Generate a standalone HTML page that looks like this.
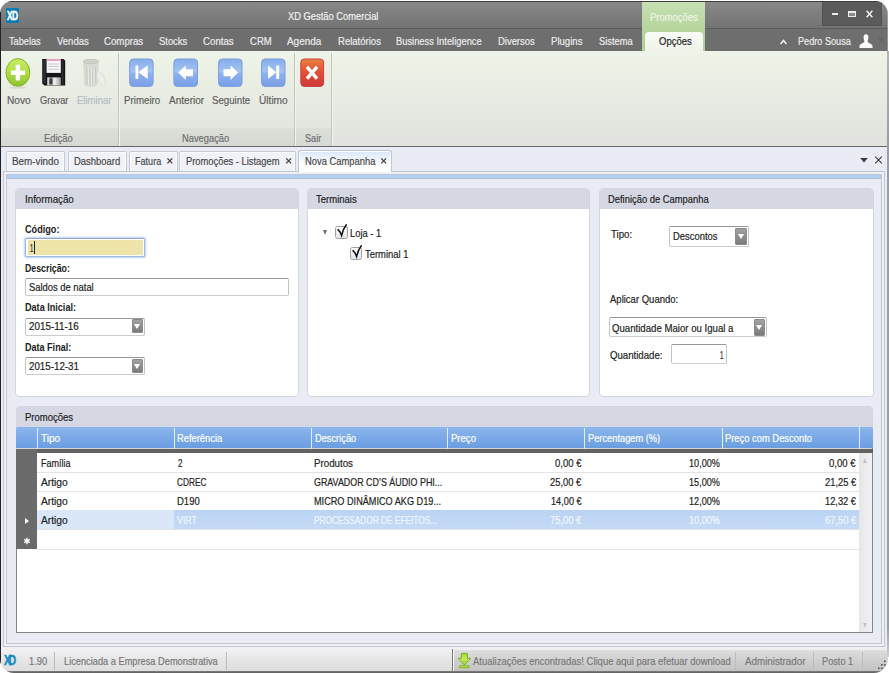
<!DOCTYPE html>
<html lang="pt"><head><meta charset="utf-8"><title>XD Gestão Comercial</title>
<style>
html,body{margin:0;padding:0;background:#fff}
body{width:889px;height:673px;position:relative;overflow:hidden;font-family:"Liberation Sans",sans-serif}
#win{position:absolute;left:0;top:0;width:889px;height:673px;clip-path:inset(1px 1.3px 0 0 round 12.5px 12.5px 14px 14px);background:#e9ecf3}
#win div,#win svg{position:absolute}
.t{-webkit-text-stroke:0.2px;position:absolute;white-space:pre;line-height:16px;height:16px;transform-origin:0 50%}
#texts{position:absolute;left:0;top:0;width:889px;height:673px;clip-path:inset(1px 1.3px 0 0 round 12.5px 12.5px 14px 14px)}
.panel{border:1px solid #d3d6de;border-radius:4px;background:#fff;box-sizing:border-box;overflow:hidden}
.phead{left:0;top:0;right:0;height:20px;background:#d5d8e2}
.inp{box-sizing:border-box;border:1px solid #c2c3c6;border-top-color:#979797;border-bottom-color:#cbccce;border-radius:2px;background:#fff}
.ddb{border-radius:1px;background:linear-gradient(#a2a2a2,#7b7b7b);border:1px solid #8a8a8a;box-sizing:border-box}
.ddb:after{content:"";position:absolute;left:50%;top:50%;margin:-2px 0 0 -3px;border:3px solid transparent;border-top:5px solid #fff;border-bottom:0}
.dtab{box-sizing:border-box;border:1px solid #c6c9d2;border-bottom:0;background:#f0f2f8;border-radius:2px 2px 0 0;box-shadow:inset 1px 1px 0 #fafbfd,inset -1px 0 0 #fafbfd}
.vsep{width:1px;background:#b9bcc4}
.hl{height:1px;background:#e3e3e3}
.cb{box-sizing:border-box;border:1.3px solid #a2a2a6;border-radius:2.5px;background:linear-gradient(#fdfdfd,#e6e6e8)}

</style></head>
<body>
<div id="win">
<!-- title bar -->
<div style="left:0;top:1px;width:889px;height:27px;background:linear-gradient(#898989,#737373)"></div>
<div style="left:0;top:1px;width:889px;height:1px;background:#3c3c3c"></div>
<div style="left:0;top:28px;width:889px;height:1px;background:#5c5c5c"></div>
<div style="left:0;top:29px;width:889px;height:22.3px;background:#6e6e6e"></div>
<!-- xd logo -->
<div style="left:6px;top:8px;width:13px;height:15px;background:#0b7bb6"></div>
<!-- contextual tab -->
<div style="left:642px;top:2px;width:63px;height:49.3px;background:linear-gradient(#c7dfb3,#b6d69d 55%,#acd092)"></div>
<div style="left:644.8px;top:32px;width:58.2px;height:19.4px;background:linear-gradient(#fafcf7,#eff2e9);border-radius:4px 4px 0 0"></div>
<!-- window buttons -->
<div style="left:822px;top:2px;width:59.8px;height:23.8px;background:#5b5b5b;box-sizing:border-box;border:1px solid #525252;border-top:0"></div>
<div style="left:831.6px;top:12.7px;width:6px;height:2px;background:#ececec"></div>
<div style="left:848.3px;top:11px;width:7.5px;height:5.7px;box-sizing:border-box;border:1px solid #ececec;border-top-width:2px;background:#8a8a8a"></div>
<svg style="left:866.3px;top:10px" width="7" height="8" viewBox="0 0 7 8"><path d="M0.6 0.8 L6.4 7.2 M6.4 0.8 L0.6 7.2" stroke="#f4f4f4" stroke-width="1.4"/></svg>
<!-- caret + user -->
<svg style="left:780.2px;top:38.5px" width="7" height="6" viewBox="0 0 7 6"><path d="M0.6 5 L3.5 1.5 L6.4 5" stroke="#f0f0f0" stroke-width="1.5" fill="none"/></svg>
<svg style="left:859.3px;top:33.5px" width="14" height="14" preserveAspectRatio="none" viewBox="0 0 15 14"><path d="M7.5 0.3 C5.6 0.3 4.9 2 4.9 3.6 C4.9 5.6 5.8 6.6 5.8 7.6 C5.8 9.2 0.5 9.6 0.5 12.2 V14 H14.5 V12.2 C14.5 9.6 9.2 9.2 9.2 7.6 C9.2 6.6 10.1 5.6 10.1 3.6 C10.1 2 9.4 0.3 7.5 0.3 Z" fill="#fafafa"/></svg>
<div style="left:878px;top:38px;width:0;height:0;border:3px solid transparent;border-top:4px solid #646464;border-bottom:0"></div>
<!-- ribbon -->
<div style="left:0;top:51px;width:889px;height:95px;background:linear-gradient(#eef4e7,#e1e2de)"></div>
<div style="left:0;top:128px;width:331px;height:18px;background:linear-gradient(#dcded8,#d6d8d3)"></div>
<div style="left:118px;top:53px;width:1px;height:93px;background:#c3c5bf"></div><div style="left:119px;top:53px;width:1px;height:93px;background:#f1f3ed"></div>
<div style="left:293.5px;top:53px;width:1px;height:93px;background:#c3c5bf"></div><div style="left:294.5px;top:53px;width:1px;height:93px;background:#f1f3ed"></div>
<div style="left:331px;top:53px;width:1px;height:93px;background:#c3c5bf"></div><div style="left:332px;top:53px;width:1px;height:93px;background:#f1f3ed"></div>
<div style="left:0;top:145.7px;width:889px;height:1.2px;background:#686868"></div>
<!-- ICONS -->
<!--ICONS_START-->
<svg style="left:0;top:52px" width="340" height="40" viewBox="0 52 340 40">
<defs>
<linearGradient id="gG" x1="0" y1="0" x2="0" y2="1"><stop offset="0" stop-color="#c9ee66"/><stop offset="0.5" stop-color="#b0de46"/><stop offset="1" stop-color="#8cc02c"/></linearGradient>
<linearGradient id="gB" x1="0" y1="0" x2="0" y2="1"><stop offset="0" stop-color="#86adea"/><stop offset="0.45" stop-color="#a3c2f3"/><stop offset="0.55" stop-color="#8cb0ee"/><stop offset="1" stop-color="#7a9fe6"/></linearGradient>
<linearGradient id="gR" x1="0" y1="0" x2="0" y2="1"><stop offset="0" stop-color="#ea8040"/><stop offset="0.5" stop-color="#df5038"/><stop offset="1" stop-color="#d0383a"/></linearGradient>
<linearGradient id="gS" x1="0" y1="0" x2="1" y2="0"><stop offset="0" stop-color="#f4f4f4"/><stop offset="0.3" stop-color="#8a8a8a"/><stop offset="0.5" stop-color="#f8f8f8"/><stop offset="1" stop-color="#9a9a9a"/></linearGradient>
</defs>
<!-- novo -->
<ellipse cx="17.9" cy="72.5" rx="11.9" ry="13.9" fill="url(#gG)" stroke="#82b02a" stroke-width="1"/>
<ellipse cx="17.9" cy="87.5" rx="9" ry="1.2" fill="#c9ccc4" opacity=".6"/>
<path d="M15.7 64.7 H20.1 V70.5 H24.9 V75.1 H20.1 V80.6 H15.7 V75.1 H11 V70.5 H15.7 Z" fill="#fff"/>
<!-- gravar -->
<path d="M42.2 59 H63.5 L65.2 60.5 V85.6 H44.4 L42.2 83.4 Z" fill="#16161a"/>
<rect x="43.4" y="60" width="2.2" height="23" fill="#3c3c44" opacity=".7"/><rect x="61.6" y="60" width="2" height="24.5" fill="#34343a" opacity=".7"/><rect x="46.6" y="59.3" width="14.2" height="13.6" fill="#f7f7f9"/>
<rect x="46.6" y="59.3" width="14.2" height="1.8" fill="#e9a3c4"/>
<rect x="48.4" y="63.6" width="10.4" height="0.8" fill="#b9bcc6"/><rect x="48.4" y="66.2" width="10.4" height="0.8" fill="#b9bcc6"/><rect x="48.4" y="68.8" width="10.4" height="0.8" fill="#b9bcc6"/>
<rect x="47.3" y="77.4" width="13.5" height="7.8" fill="url(#gS)"/>
<rect x="49.4" y="78.6" width="3" height="5.6" fill="#3a3a3e"/>
<!-- eliminar (disabled) -->
<g opacity=".95">
<path d="M83.6 62 L84.8 84.6 C86.6 86.8 95.2 86.8 96.9 84.6 L98.2 62 C95.6 65 86.2 65 83.6 62 Z" fill="#d9dbd6" stroke="#cbcdc8" stroke-width=".6"/>
<path d="M86.6 66 L87.3 84.6 M89.8 66.6 L90.1 85.6 M92.9 66.6 L92.8 85.6 M95.6 66 L95.2 84.6" stroke="#c5c7c2" stroke-width="1"/>
<path d="M88.2 66.4 L88.7 85.2 M91.4 66.8 L91.5 85.8 M94.3 66.4 L94.1 85.2" stroke="#e9ebe6" stroke-width=".9"/>
<ellipse cx="90.9" cy="61.5" rx="7.6" ry="2.2" fill="#cdd0c9" stroke="#bfc2bb" stroke-width=".9"/>
<ellipse cx="101" cy="78.8" rx="3.3" ry="7.6" transform="rotate(-24 101 78.8)" fill="#eceeea" stroke="#d6d8d3" stroke-width=".7"/>
</g>
<!-- nav buttons -->
<rect x="129.7" y="59" width="23.4" height="27.4" rx="3.5" fill="url(#gB)" stroke="#7c9ddd" stroke-width="1"/>
<path d="M135.5 65.5 H138.3 V79 H135.5 Z M138.3 72.3 L147.7 65.5 V79 Z" fill="#fff"/>
<rect x="173.9" y="59" width="23.6" height="27.4" rx="3.5" fill="url(#gB)" stroke="#7c9ddd" stroke-width="1"/>
<path d="M178.1 72.6 L185.8 65.5 V69.3 H193 V76.3 H185.8 V80 Z" fill="#fff"/>
<rect x="218.6" y="59" width="23.4" height="27.4" rx="3.5" fill="url(#gB)" stroke="#7c9ddd" stroke-width="1"/>
<path d="M238.1 72.6 L230.6 65.5 V69.3 H223.5 V76.3 H230.6 V80 Z" fill="#fff"/>
<rect x="261.6" y="59" width="23.4" height="27.4" rx="3.5" fill="url(#gB)" stroke="#7c9ddd" stroke-width="1"/>
<path d="M279.2 65.5 H276.3 V79 H279.2 Z M276.3 72.3 L268.1 65.5 V79 Z" fill="#fff"/>
<!-- sair -->
<rect x="300.8" y="59" width="22.8" height="27.4" rx="3.5" fill="url(#gR)" stroke="#c8403c" stroke-width="1"/>
<path d="M307 66.8 L317 78.6 M317 66.8 L307 78.6" stroke="#fff" stroke-width="3.4"/>
</svg>
<!--ICONS_END-->
<!-- doc tabs -->
<div style="left:0;top:146.5px;width:889px;height:32px;background:#e9ecf5"></div>
<div class="dtab" style="left:6.2px;top:151px;width:59.3px;height:20px"></div>
<div class="dtab" style="left:67.5px;top:151px;width:59.3px;height:20px"></div>
<div class="dtab" style="left:128.5px;top:151px;width:49.3px;height:20px"></div>
<div class="dtab" style="left:179.2px;top:151px;width:117.3px;height:20px"></div>
<div style="left:3.4px;top:170.5px;width:881.8px;height:476.3px;box-sizing:border-box;border:1px solid #c3c6cf;background:#eef0f7"></div>
<div style="left:6.3px;top:174px;width:876px;height:469.5px;box-sizing:border-box;border:1px solid #c0c5d0;background:#e9ecf5"></div>
<div style="left:7.3px;top:175px;width:874px;height:3.2px;background:#b1d0f5"></div>
<div style="left:7.3px;top:178.2px;width:874px;height:1px;background:#b9bfcc"></div>
<div class="dtab" style="left:298.4px;top:150px;width:93.7px;height:21.6px;background:linear-gradient(#d9e6f9,#fff 65%);border-color:#bcc6d8;border-radius:3px 3px 0 0"></div>
<!-- tab closers -->
<svg style="left:0;top:150px" width="889" height="24" viewBox="0 150 889 24"><g stroke="#3c3c3c" stroke-width="1.25" fill="none">
<path d="M167.4 158.4 L172.3 163.4 M172.3 158.4 L167.4 163.4"/>
<path d="M286.2 158.4 L291.1 163.4 M291.1 158.4 L286.2 163.4"/>
<path d="M381.2 158.4 L386.1 163.4 M386.1 158.4 L381.2 163.4"/>
<path d="M875.2 156.6 L881.8 163.3 M881.8 156.6 L875.2 163.3" stroke-width="1.1"/>
</g><path d="M860.2 158 H867.8 L864 162.4 Z" fill="#3c3c3c"/></svg>
<!-- doc area -->
<!-- panels -->
<div class="panel" style="left:15px;top:188px;width:283.6px;height:208.5px"><div class="phead"></div></div>
<div class="panel" style="left:306.6px;top:188px;width:283.6px;height:208.5px"><div class="phead"></div></div>
<div class="panel" style="left:598.5px;top:188px;width:275px;height:208.5px"><div class="phead"></div></div>
<div class="panel" style="left:15.5px;top:406.25px;width:857.5px;height:227px;border-radius:4px 4px 0 0;background:#d5d8e2"></div>
<!-- inputs -->
<div class="inp" style="left:25px;top:237.8px;width:119.6px;height:19.6px;background:#fff;border-color:#9db8e4;border-top-color:#93a6c6;box-shadow:0 0 2px 0.6px #bcd2f3"></div><div style="left:27.6px;top:239.7px;width:115.4px;height:15.6px;background:#eee4a9"></div>
<div style="left:34px;top:241.3px;width:1px;height:13px;background:#222"></div>
<div class="inp" style="left:25px;top:278px;width:263.5px;height:17.5px"></div>
<div class="inp" style="left:25px;top:317.5px;width:120px;height:18px"></div><div class="ddb" style="left:131.6px;top:319.3px;width:11.8px;height:14.2px"></div>
<div class="inp" style="left:25px;top:356.75px;width:120px;height:18px"></div><div class="ddb" style="left:131.6px;top:358.6px;width:11.8px;height:14.2px"></div>
<div class="inp" style="left:669px;top:226px;width:79.5px;height:20.7px"></div><div class="ddb" style="left:735.25px;top:227.5px;width:11.5px;height:17px"></div>
<div class="inp" style="left:608.5px;top:317px;width:158px;height:19.75px"></div><div class="ddb" style="left:753.5px;top:318.5px;width:11.5px;height:17px"></div>
<div class="inp" style="left:671px;top:343.75px;width:55.75px;height:20.5px"></div>
<!-- tree -->
<div style="left:322.9px;top:230.2px;width:0;height:0;border:2.6px solid transparent;border-top:5px solid #6e6e6e;border-bottom:0"></div>
<div class="cb" style="left:335px;top:225.7px;width:12.5px;height:13.2px"></div>
<svg style="left:335.3px;top:223.4px" width="14" height="16" viewBox="0 0 14 16"><path d="M2.6 6.2 L5.2 9.2 L6.6 12.6 C7.6 8 9.4 4 11.6 1.2" stroke="#111" stroke-width="1.5" fill="none"/></svg>
<div class="cb" style="left:350.2px;top:246.7px;width:12.2px;height:13.2px"></div>
<svg style="left:350.3px;top:244.4px" width="14" height="16" viewBox="0 0 14 16"><path d="M2.6 6.2 L5.2 9.2 L6.6 12.6 C7.6 8 9.4 4 11.6 1.2" stroke="#111" stroke-width="1.5" fill="none"/></svg>
<!-- grid -->
<div style="left:16.2px;top:431px;width:856.6px;height:201.5px;background:#fff;box-sizing:border-box;border:1px solid #868686;border-top:0"></div>
<div style="left:16px;top:427.2px;width:856.8px;height:20.8px;background:linear-gradient(#8cb6ec,#6a9de2);border-radius:2px 2px 0 0"></div>
<div style="left:16px;top:448px;width:856px;height:1px;background:#d9d4d0"></div><div style="left:16px;top:448.7px;width:856.8px;height:4px;background:#626262"></div>
<div style="left:16px;top:448.7px;width:21px;height:100px;background:#6a6a6a"></div>
<div style="left:36.6px;top:427.5px;width:1px;height:21px;background:#e3edfb"></div>
<div style="left:173.6px;top:427.5px;width:1px;height:21px;background:#e3edfb"></div>
<div style="left:311.2px;top:427.5px;width:1px;height:21px;background:#e3edfb"></div>
<div style="left:447.3px;top:427.5px;width:1px;height:21px;background:#e3edfb"></div>
<div style="left:584.4px;top:427.5px;width:1px;height:21px;background:#e3edfb"></div>
<div style="left:722px;top:427.5px;width:1px;height:21px;background:#e3edfb"></div>
<div style="left:858.9px;top:426px;width:1px;height:22.5px;background:#e3edfb"></div>
<!-- selected row -->
<div style="left:37px;top:510.3px;width:137px;height:19px;background:#d9e7f9"></div>
<div style="left:174px;top:510.3px;width:685.3px;height:19px;background:linear-gradient(#bbd3f3,#c5daf5)"></div>
<div class="hl" style="left:37px;top:472px;width:822px"></div>
<div class="hl" style="left:37px;top:491.25px;width:822px"></div>
<div class="hl" style="left:37px;top:529.3px;width:822px"></div>
<div class="hl" style="left:37px;top:548.5px;width:822px"></div>
<!-- scrollbar -->
<div style="left:859.3px;top:452.7px;width:12.5px;height:179px;background:linear-gradient(90deg,#e6e6e6,#f1f1f1)"></div>
<div style="left:863.3px;top:458px;width:0;height:0;border:2.6px solid transparent;border-bottom:5px solid #c4c4c4;border-top:0"></div>
<div style="left:863.4px;top:622.7px;width:0;height:0;border:2.6px solid transparent;border-top:5px solid #c4c4c4;border-bottom:0"></div>
<!-- row indicators -->
<div style="left:25px;top:517.5px;width:0;height:0;border:3.5px solid transparent;border-left:4px solid #fff;border-right:0"></div>
<svg style="left:22.7px;top:537px" width="8" height="8" viewBox="0 0 8 8"><path d="M4 0.8 V7.2 M1.2 2.4 L6.8 5.6 M6.8 2.4 L1.2 5.6" stroke="#fff" stroke-width="1.4"/></svg>
<!-- status bar -->
<div style="left:0;top:647px;width:889px;height:25px;background:linear-gradient(#eff0f5,#f0f0f2 15%,#e6e6e7 50%,#dddddd)"></div>
<div style="left:453.5px;top:650px;width:436px;height:22px;background:linear-gradient(#dededf,#cfcfd0 50%,#c2c2c3)"></div>
<div style="left:0;top:671.2px;width:889px;height:2px;background:linear-gradient(#808080,#5c5c5c)"></div>
<div class="vsep" style="left:54px;top:652px;height:18px"></div>
<div class="vsep" style="left:225.5px;top:652px;height:18px"></div>
<div class="vsep" style="left:452.3px;top:649px;height:22px;background:#777"></div><div class="vsep" style="left:453.3px;top:649px;height:22px;background:#fafafa"></div>
<div class="vsep" style="left:735px;top:652px;height:18px"></div>
<div class="vsep" style="left:812.7px;top:652px;height:18px"></div>
<div class="vsep" style="left:861.7px;top:652px;height:18px"></div>
<svg style="left:456px;top:652px" width="17" height="18" viewBox="456 652 17 18"><defs><linearGradient id="gD" x1="0" y1="0" x2="0" y2="1"><stop offset="0" stop-color="#a5d63a"/><stop offset=".5" stop-color="#c4ea5e"/><stop offset="1" stop-color="#98cc2c"/></linearGradient></defs>
<path d="M461.4 653.4 H467.4 V658.4 H470.6 L464.4 665 L458.2 658.4 H461.4 Z" fill="url(#gD)" stroke="#78b31c" stroke-width="1" stroke-linejoin="round"/>
<rect x="459.6" y="665.8" width="9.4" height="2" fill="#b6e24c" stroke="#78b31c" stroke-width=".9"/></svg>
<svg style="left:876px;top:658px" width="12" height="14" viewBox="876 658 12 14"><g fill="#555"><rect x="884" y="660.5" width="1.6" height="1.6"/><rect x="881" y="664" width="1.6" height="1.6"/><rect x="884" y="664" width="1.6" height="1.6"/><rect x="878" y="667.5" width="1.6" height="1.6"/><rect x="881" y="667.5" width="1.6" height="1.6"/></g></svg>
<!-- window inner borders -->
<div style="left:0;top:12px;width:1.1px;height:661px;background:#202228"></div>
</div>
<div id="redge" style="position:absolute;left:887.4px;top:51px;width:1.6px;height:606px;background:linear-gradient(#b4b4b4,#9a9da6 15%,#9a9da6 95%,#d0d0d4)"></div>

<div id="texts">
<span class="t" style="left:287.65px;top:8.00px;font-size:11.5px;color:#f2f2f2;transform:scaleX(0.8133)">XD Gestão Comercial</span>
<span class="t" style="left:8.90px;top:33.40px;font-size:11.5px;color:#ececec;transform:scaleX(0.7997)">Tabelas</span>
<span class="t" style="left:56.90px;top:33.40px;font-size:11.5px;color:#ececec;transform:scaleX(0.8261)">Vendas</span>
<span class="t" style="left:104.40px;top:33.40px;font-size:11.5px;color:#ececec;transform:scaleX(0.8402)">Compras</span>
<span class="t" style="left:159.40px;top:33.40px;font-size:11.5px;color:#ececec;transform:scaleX(0.8170)">Stocks</span>
<span class="t" style="left:203.15px;top:33.40px;font-size:11.5px;color:#ececec;transform:scaleX(0.8425)">Contas</span>
<span class="t" style="left:249.65px;top:33.40px;font-size:11.5px;color:#ececec;transform:scaleX(0.8281)">CRM</span>
<span class="t" style="left:287.15px;top:33.40px;font-size:11.5px;color:#ececec;transform:scaleX(0.8624)">Agenda</span>
<span class="t" style="left:337.65px;top:33.40px;font-size:11.5px;color:#ececec;transform:scaleX(0.8295)">Relatórios</span>
<span class="t" style="left:396.40px;top:33.40px;font-size:11.5px;color:#ececec;transform:scaleX(0.8124)">Business Inteligence</span>
<span class="t" style="left:498.40px;top:33.40px;font-size:11.5px;color:#ececec;transform:scaleX(0.8204)">Diversos</span>
<span class="t" style="left:551.40px;top:33.40px;font-size:11.5px;color:#ececec;transform:scaleX(0.8338)">Plugins</span>
<span class="t" style="left:598.90px;top:33.40px;font-size:11.5px;color:#ececec;transform:scaleX(0.8111)">Sistema</span>
<span class="t" style="left:658.90px;top:33.40px;font-size:11.5px;color:#222;transform:scaleX(0.8249)">Opções</span>
<span class="t" style="left:650.15px;top:9.00px;font-size:11.5px;color:#eef6e6;transform:scaleX(0.8200)">Promoções</span>
<span class="t" style="left:797.80px;top:32.70px;font-size:11.5px;color:#ececec;transform:scaleX(0.7940)">Pedro Sousa</span>
<span class="t" style="left:6.70px;top:7.71px;font-size:12.5px;color:#ffffff;font-weight:700;letter-spacing:-1px;-webkit-text-stroke:0.5px;transform:scaleX(0.6699)">XD</span>
<span class="t" style="left:4.00px;top:651.88px;font-size:14px;color:#1b8bc2;font-weight:700;letter-spacing:-3.4px;-webkit-text-stroke:0.5px;transform:scaleX(0.7506)">XD</span>
<span class="t" style="left:6.90px;top:92.25px;font-size:11.5px;color:#5e5e5e;transform:scaleX(0.8824)">Novo</span>
<span class="t" style="left:40.15px;top:92.25px;font-size:11.5px;color:#5e5e5e;transform:scaleX(0.8092)">Gravar</span>
<span class="t" style="left:77.40px;top:92.25px;font-size:11.5px;color:#b4bcc4;transform:scaleX(0.8292)">Eliminar</span>
<span class="t" style="left:123.65px;top:92.25px;font-size:11.5px;color:#5e5e5e;transform:scaleX(0.8455)">Primeiro</span>
<span class="t" style="left:168.65px;top:92.25px;font-size:11.5px;color:#5e5e5e;transform:scaleX(0.8739)">Anterior</span>
<span class="t" style="left:211.90px;top:92.25px;font-size:11.5px;color:#5e5e5e;transform:scaleX(0.8413)">Seguinte</span>
<span class="t" style="left:258.90px;top:92.25px;font-size:11.5px;color:#5e5e5e;transform:scaleX(0.8805)">Último</span>
<span class="t" style="left:44.40px;top:129.50px;font-size:11.5px;color:#6e6e6e;transform:scaleX(0.8160)">Edição</span>
<span class="t" style="left:182.40px;top:129.50px;font-size:11.5px;color:#6e6e6e;transform:scaleX(0.8112)">Navegação</span>
<span class="t" style="left:305.15px;top:129.50px;font-size:11.5px;color:#6e6e6e;transform:scaleX(0.7921)">Sair</span>
<span class="t" style="left:12.40px;top:152.80px;font-size:11.5px;color:#484848;transform:scaleX(0.8541)">Bem-vindo</span>
<span class="t" style="left:73.90px;top:152.80px;font-size:11.5px;color:#484848;transform:scaleX(0.8211)">Dashboard</span>
<span class="t" style="left:135.15px;top:152.80px;font-size:11.5px;color:#484848;transform:scaleX(0.7880)">Fatura</span>
<span class="t" style="left:186.15px;top:152.80px;font-size:11.5px;color:#484848;transform:scaleX(0.8123)">Promoções - Listagem</span>
<span class="t" style="left:305.15px;top:152.80px;font-size:11.5px;color:#484848;transform:scaleX(0.8162)">Nova Campanha</span>
<span class="t" style="left:25.00px;top:190.90px;font-size:11.5px;color:#222;transform:scaleX(0.8482)">Informação</span>
<span class="t" style="left:25.30px;top:220.70px;font-size:11.5px;color:#222;font-weight:700;-webkit-text-stroke:0;transform:scaleX(0.7942)">Código:</span>
<span class="t" style="left:30.20px;top:239.50px;font-size:11.5px;color:#222;transform:scaleX(0.5151)">1</span>
<span class="t" style="left:25.30px;top:259.90px;font-size:11.5px;color:#222;font-weight:700;-webkit-text-stroke:0;transform:scaleX(0.7634)">Descrição:</span>
<span class="t" style="left:29.00px;top:278.90px;font-size:11.5px;color:#222;transform:scaleX(0.8159)">Saldos de natal</span>
<span class="t" style="left:25.30px;top:299.20px;font-size:11.5px;color:#222;font-weight:700;-webkit-text-stroke:0;transform:scaleX(0.7899)">Data Inicial:</span>
<span class="t" style="left:29.00px;top:318.30px;font-size:11.5px;color:#222;transform:scaleX(0.8589)">2015-11-16</span>
<span class="t" style="left:25.30px;top:339.00px;font-size:11.5px;color:#222;font-weight:700;-webkit-text-stroke:0;transform:scaleX(0.7858)">Data Final:</span>
<span class="t" style="left:28.90px;top:357.75px;font-size:11.5px;color:#222;transform:scaleX(0.8491)">2015-12-31</span>
<span class="t" style="left:316.40px;top:190.90px;font-size:11.5px;color:#222;transform:scaleX(0.8269)">Terminais</span>
<span class="t" style="left:350.15px;top:224.50px;font-size:11.5px;color:#222;transform:scaleX(0.8134)">Loja - 1</span>
<span class="t" style="left:365.15px;top:245.50px;font-size:11.5px;color:#222;transform:scaleX(0.8188)">Terminal 1</span>
<span class="t" style="left:608.40px;top:190.90px;font-size:11.5px;color:#222;transform:scaleX(0.8161)">Definição de Campanha</span>
<span class="t" style="left:610.90px;top:225.50px;font-size:11.5px;color:#222;transform:scaleX(0.8433)">Tipo:</span>
<span class="t" style="left:673.40px;top:228.40px;font-size:11.5px;color:#222;transform:scaleX(0.8189)">Descontos</span>
<span class="t" style="left:610.40px;top:290.50px;font-size:11.5px;color:#222;transform:scaleX(0.8270)">Aplicar Quando:</span>
<span class="t" style="left:612.15px;top:319.50px;font-size:11.5px;color:#222;transform:scaleX(0.8368)">Quantidade Maior ou Igual a</span>
<span class="t" style="left:610.40px;top:347.00px;font-size:11.5px;color:#222;transform:scaleX(0.8369)">Quantidade:</span>
<span class="t" style="left:719.50px;top:346.50px;font-size:11.5px;color:#222;transform:scaleX(0.5463)">1</span>
<span class="t" style="left:25.00px;top:408.60px;font-size:11.5px;color:#222;transform:scaleX(0.8269)">Promoções</span>
<span class="t" style="left:40.65px;top:430.25px;font-size:11.5px;color:#ffffff;transform:scaleX(0.8746)">Tipo</span>
<span class="t" style="left:176.90px;top:430.25px;font-size:11.5px;color:#ffffff;transform:scaleX(0.8126)">Referência</span>
<span class="t" style="left:314.65px;top:430.25px;font-size:11.5px;color:#ffffff;transform:scaleX(0.8056)">Descrição</span>
<span class="t" style="left:450.90px;top:430.25px;font-size:11.5px;color:#ffffff;transform:scaleX(0.8304)">Preço</span>
<span class="t" style="left:587.90px;top:430.25px;font-size:11.5px;color:#ffffff;transform:scaleX(0.8068)">Percentagem (%)</span>
<span class="t" style="left:725.40px;top:430.25px;font-size:11.5px;color:#ffffff;transform:scaleX(0.8145)">Preço com Desconto</span>
<span class="t" style="left:40.65px;top:455.00px;font-size:11.5px;color:#222;transform:scaleX(0.7811)">Família</span>
<span class="t" style="left:40.65px;top:474.10px;font-size:11.5px;color:#222;transform:scaleX(0.8886)">Artigo</span>
<span class="t" style="left:40.65px;top:493.20px;font-size:11.5px;color:#222;transform:scaleX(0.8886)">Artigo</span>
<span class="t" style="left:40.65px;top:512.25px;font-size:11.5px;color:#222;transform:scaleX(0.8886)">Artigo</span>
<span class="t" style="left:178.00px;top:455.00px;font-size:11.5px;color:#222;transform:scaleX(0.7024)">2</span>
<span class="t" style="left:177.40px;top:474.10px;font-size:11.5px;color:#222;transform:scaleX(0.7202)">CDREC</span>
<span class="t" style="left:177.40px;top:493.20px;font-size:11.5px;color:#222;transform:scaleX(0.8255)">D190</span>
<span class="t" style="left:177.40px;top:512.25px;font-size:11.5px;color:#f1f6fd;transform:scaleX(0.7673)">VIRT</span>
<span class="t" style="left:314.40px;top:455.00px;font-size:11.5px;color:#222;transform:scaleX(0.8462)">Produtos</span>
<span class="t" style="left:314.40px;top:474.10px;font-size:11.5px;color:#222;transform:scaleX(0.7736)">GRAVADOR CD’S ÁUDIO PHI...</span>
<span class="t" style="left:314.40px;top:493.20px;font-size:11.5px;color:#222;transform:scaleX(0.7950)">MICRO DINÂMICO AKG D19...</span>
<span class="t" style="left:314.40px;top:512.25px;font-size:11.5px;color:#f1f6fd;transform:scaleX(0.7230)">PROCESSADOR DE EFEITOS...</span>
<span class="t" style="left:555.15px;top:455.00px;font-size:11.5px;color:#222;transform:scaleX(0.8270)">0,00 €</span>
<span class="t" style="left:550.40px;top:474.10px;font-size:11.5px;color:#222;transform:scaleX(0.8130)">25,00 €</span>
<span class="t" style="left:550.90px;top:493.20px;font-size:11.5px;color:#222;transform:scaleX(0.8000)">14,00 €</span>
<span class="t" style="left:550.40px;top:512.25px;font-size:11.5px;color:#f1f6fd;transform:scaleX(0.8130)">75,00 €</span>
<span class="t" style="left:688.65px;top:455.00px;font-size:11.5px;color:#222;transform:scaleX(0.7933)">10,00%</span>
<span class="t" style="left:688.65px;top:474.10px;font-size:11.5px;color:#222;transform:scaleX(0.7933)">15,00%</span>
<span class="t" style="left:688.65px;top:493.20px;font-size:11.5px;color:#222;transform:scaleX(0.7933)">12,00%</span>
<span class="t" style="left:688.65px;top:512.25px;font-size:11.5px;color:#f1f6fd;transform:scaleX(0.7933)">10,00%</span>
<span class="t" style="left:829.15px;top:455.00px;font-size:11.5px;color:#222;transform:scaleX(0.8348)">0,00 €</span>
<span class="t" style="left:824.65px;top:474.10px;font-size:11.5px;color:#222;transform:scaleX(0.8130)">21,25 €</span>
<span class="t" style="left:824.90px;top:493.20px;font-size:11.5px;color:#222;transform:scaleX(0.8065)">12,32 €</span>
<span class="t" style="left:824.65px;top:512.25px;font-size:11.5px;color:#f1f6fd;transform:scaleX(0.8130)">67,50 €</span>
<span class="t" style="left:28.80px;top:653.40px;font-size:11.5px;color:#787878;transform:scaleX(0.8084)">1.90</span>
<span class="t" style="left:64.40px;top:653.20px;font-size:11.5px;color:#787878;transform:scaleX(0.8042)">Licenciada a Empresa Demonstrativa</span>
<span class="t" style="left:473.40px;top:653.20px;font-size:11.5px;color:#787878;transform:scaleX(0.8226)">Atualizações encontradas! Clique aqui para efetuar download</span>
<span class="t" style="left:744.90px;top:653.20px;font-size:11.5px;color:#787878;transform:scaleX(0.8520)">Administrador</span>
<span class="t" style="left:822.40px;top:653.20px;font-size:11.5px;color:#787878;transform:scaleX(0.8000)">Posto 1</span>
</div>
</body></html>
